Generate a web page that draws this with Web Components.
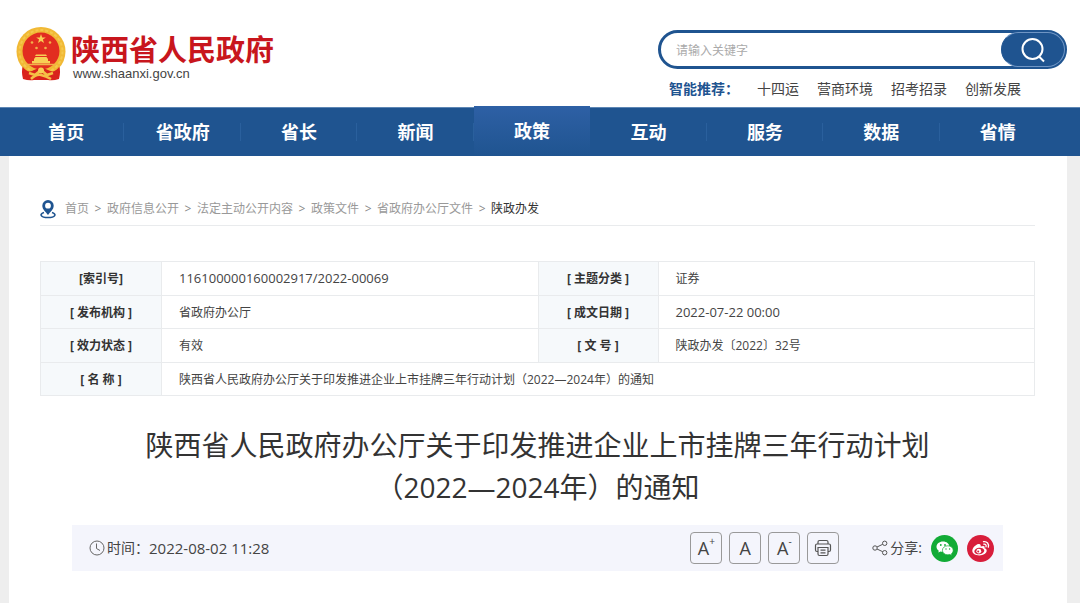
<!DOCTYPE html>
<html lang="zh-CN">
<head>
<meta charset="utf-8">
<meta name="viewport" content="width=device-width, initial-scale=1">
<title>陕西省人民政府</title>
<style>
  html, body { margin: 0; min-height: 100%; }
  html { background: #eeeeee; }
  body {
    display: flex; flex-direction: column; min-height: 100vh;
    font-family: "Open Sans", "Noto Sans CJK SC", sans-serif;
    font-size: 12px; line-height: 20px; color: #444;
    --blue: #1f5490; --line: #e9ebed;
  }
</style>
</head>
<body>
<gov-header></gov-header>
<gov-nav></gov-nav>
<gov-page>
  <crumb-trail></crumb-trail>
  <doc-info></doc-info>
  <doc-title>陕西省人民政府办公厅关于印发推进企业上市挂牌三年行动计划<br>（2022—2024年）的通知</doc-title>
  <doc-meta><time datetime="2022-08-02T11:28">2022-08-02 11:28</time></doc-meta>
</gov-page>

<script>
const define = (name, html) => {
  const t = document.createElement('template');
  t.innerHTML = html;
  customElements.define(name, class extends HTMLElement {
    constructor() {
      super();
      this.attachShadow({ mode: 'open' }).append(t.content.cloneNode(true));
    }
  });
};

define('gov-emblem', `
<style>:host{display:block;width:50px;height:54px;flex:none} svg{display:block;width:100%;height:100%}</style>
<svg viewBox="0 0 50 54" aria-hidden="true">
  <path d="M7 36Q5 45 7 52Q13 54 18 53H32Q37 54 43 52Q45 45 43 36Z" fill="#d9231c"/>
  <circle cx="25" cy="24.500" r="24.500" fill="#f1b935"/>
  <circle cx="25" cy="24.500" r="21.500" fill="none" stroke="#f5c84e" stroke-width="2" stroke-dasharray="3 2"/>
  <circle cx="25" cy="24" r="18.500" fill="#e22d20"/>
  <path d="M25 7l1.200 3.400h3.600l-2.900 2.100 1.100 3.500-3-2.100-3 2.100 1.100-3.500-2.900-2.100h3.600z" fill="#f8cf55"/>
  <g fill="#f3b04a"><circle cx="16" cy="15.500" r="1.300"/><circle cx="34" cy="15.500" r="1.300"/><circle cx="20.500" cy="21" r="1.300"/><circle cx="29.500" cy="21" r="1.300"/></g>
  <path d="M19 29l1-1.500h10l1 1.500zM18 32l1.500-2h11l1.500 2v2h2v2.500H16V34h2z" fill="#f8cf55"/>
  <path d="M10 37.500H40" stroke="#f3b04a" stroke-width="1.500"/>
  <path d="M7 40Q12 47 18 43Q25 39 32 43Q38 47 43 40L42 49Q35 51 31 48H19Q15 51 8 49Z" fill="#d9231c"/>
  <path d="M13 46L19 48 25 43 31 48 37 46M15 52Q20 47 25 48T35 52" fill="none" stroke="#f5c045" stroke-width="2.500"/>
  <circle cx="25" cy="43.500" r="3" fill="#f8cf55"/>
</svg>`);

define('gov-header', `
<style>
  :host{display:flex;justify-content:space-between;align-items:flex-start;background:#fff;padding:27px 13px 0 16px;height:80px}
  .brand{display:flex;gap:5px;text-decoration:none}
  .words{padding-top:6px;font-family:"Liberation Sans","Noto Sans CJK SC",sans-serif}
  .name{display:block;font-size:29px;line-height:36px;font-weight:700;color:#c8161d}
  .site{display:block;font-size:13px;line-height:10px;color:#444;padding-left:2px}
  .find{width:409px;padding-top:3px}
  form{display:flex;box-sizing:border-box;height:39px;border:3px solid var(--blue);border-radius:20px;background:#fff;margin:0}
  input{flex:1;min-width:0;border:0;outline:0;background:none;padding:2px 15px 0;font:inherit;color:#444}
  input::placeholder{color:#aaa;opacity:1}
  button{width:64px;margin:-1px -1px -1px 0;border:1px solid #6f95c4;border-left-color:var(--blue);border-radius:18px;background:var(--blue);padding:0;display:grid;place-items:center}
  button svg{width:26px;height:26px}
  .hot{display:flex;gap:18px;padding:10px 0 0 11px;font-size:14px;line-height:20px;white-space:nowrap}
  .hot b{color:var(--blue)} .hot a{color:#444;text-decoration:none}
</style>
<a class="brand" href="#"><gov-emblem></gov-emblem><span class="words"><strong class="name">陕西省人民政府</strong><span class="site">www.shaanxi.gov.cn</span></span></a>
<div class="find">
  <form><input type="text" aria-label="关键字" placeholder="请输入关键字"><button type="button" aria-label="搜索">
    <svg viewBox="0 0 26 26" fill="none" stroke="#fff" stroke-width="2"><circle cx="12.500" cy="12" r="10"/><path d="M19 19.500L24 24.500"/></svg></button></form>
  <div class="hot"><b>智能推荐：</b><a href="#">十四运</a><a href="#">营商环境</a><a href="#">招考招录</a><a href="#">创新发展</a></div>
</div>`);

define('gov-nav', `
<style>
  :host{display:block;background:var(--blue);box-shadow:inset 0 1px #5d86b4}
  nav{display:grid;grid-template-columns:repeat(9,1fr);padding:0 24px 0 8px}
  a{color:#fff;text-decoration:none;text-align:center;font-size:18px;font-weight:700;line-height:47px;padding-top:2px;
    background:linear-gradient(#2a609d,#2a609d) right center/1px 18px no-repeat}
  a:last-child{background:none}
  a.on{margin-top:-1px;background:linear-gradient(#2e60a5,#1f5490)}
</style>
<nav><a href="#">首页</a><a href="#">省政府</a><a href="#">省长</a><a href="#">新闻</a><a href="#" class="on" aria-current="page">政策</a><a href="#">互动</a><a href="#">服务</a><a href="#">数据</a><a href="#">省情</a></nav>`);

define('gov-page', `
<style>:host{display:block;flex:1;background:#fff;margin:0 13px 0 9px;padding:36px 32px 32px 31px}</style><slot></slot>`);

define('crumb-trail', `
<style>
  :host{display:block;border-bottom:1px solid var(--line)}
  nav{display:flex;align-items:center;padding:7px 0 6px}
  svg{width:16px;height:20px;margin-right:9px}
  a{color:#999;text-decoration:none} i{font-style:normal;color:#888;width:18px;text-align:center} b{font-weight:400;color:#333}
</style>
<nav aria-label="当前位置">
  <svg viewBox="0 0 16 20" aria-hidden="true"><path d="M4 13.500C-1 15 .5 18.500 8 18.500S17 15 12 13.500" fill="none" stroke="#1f5490" stroke-width="1.600"/><path fill-rule="evenodd" d="M8 1A5.700 5.700 0 0 0 2.300 6.700C2.300 10.500 6 13 8 16C10 13 13.700 10.500 13.700 6.700A5.700 5.700 0 0 0 8 1ZM8 3.800A2.900 2.900 0 1 1 8 9.600A2.900 2.900 0 0 1 8 3.800Z" fill="#1f5490"/></svg>
  <a href="#">首页</a><i>&gt;</i><a href="#">政府信息公开</a><i>&gt;</i><a href="#">法定主动公开内容</a><i>&gt;</i><a href="#">政策文件</a><i>&gt;</i><a href="#">省政府办公厅文件</a><i>&gt;</i><b>陕政办发</b>
</nav>`);

define('doc-info', `
<style>
  :host{display:block;padding-top:35px}
  table{width:100%;height:135px;border-collapse:collapse;table-layout:fixed}
  th,td{border:1px solid var(--line);padding:2px 0 0;font-size:12px;line-height:20px}
  th{background:#f6f9fb;color:#333;text-align:center} td{padding-left:17px;text-align:left}
  .num{font-size:13px;padding-top:0}
</style>
<table>
  <colgroup><col style="width:121px"><col><col style="width:120px"><col></colgroup>
  <tr><th scope="row">[索引号]</th><td class="num">116100000160002917/2022-00069</td><th scope="row">[ 主题分类 ]</th><td>证券</td></tr>
  <tr><th scope="row">[ 发布机构 ]</th><td>省政府办公厅</td><th scope="row">[ 成文日期 ]</th><td class="num">2022-07-22 00:00</td></tr>
  <tr><th scope="row">[ 效力状态 ]</th><td>有效</td><th scope="row">[ 文 号 ]</th><td>陕政办发〔2022〕32号</td></tr>
  <tr><th scope="row">[ 名 称 ]</th><td colspan="3">陕西省人民政府办公厅关于印发推进企业上市挂牌三年行动计划（2022—2024年）的通知</td></tr>
</table>`);

define('doc-title', `
<style>:host{display:block} h1{margin:28px 0 17px;font-size:28px;line-height:42px;font-weight:400;text-align:center;color:#333}</style>
<h1><slot></slot></h1>`);

define('doc-meta', `
<style>
  :host{display:flex;align-items:center;margin:0 32px;padding:0 9px 0 17px;height:46px;background:#f4f5fc;font-size:14px;color:#444}
  svg{display:block}
  .clock{width:16px;height:16px;margin-right:2px}
  ::slotted(time){font-size:15px}
  .tools{display:flex;gap:7px;margin-left:auto}
  button{display:flex;align-items:center;justify-content:center;box-sizing:border-box;width:32px;height:32px;padding:0;border:1px solid #999;border-radius:4px;background:none;font:inherit;font-size:18px;line-height:20px;color:#444}
  button small{font-size:10px;line-height:10px;align-self:flex-start;padding-top:3px}
  .share{display:flex;align-items:center;margin-left:33px}
  .share span{padding-left:2px}
  .share a{width:27px;height:27px;margin-left:9px} .share a svg{width:27px;height:27px}
</style>
<svg class="clock" viewBox="0 0 16 16" fill="none" stroke="#666" aria-hidden="true"><circle cx="8" cy="8" r="7"/><path d="M7.500 3.500V8.500L11 10.500"/></svg>
<span>时间：</span><slot></slot>
<div class="tools">
  <button type="button">A<small>+</small></button><button type="button">A</button><button type="button">A<small>-</small></button>
  <button type="button" aria-label="打印"><svg width="18" height="18" viewBox="0 0 18 18" fill="none" stroke="#555" stroke-width="1.200"><path d="M4 5V3Q4 1.500 5.500 1.500H12.500Q14 1.500 14 3V5M4 12.500H3Q1.500 12.500 1.500 11V6.500Q1.500 5 3 5H15Q16.500 5 16.500 6.500V11Q16.500 12.500 15 12.500H14M4 8.500H14V15Q14 16.500 12.500 16.500H5.500Q4 16.500 4 15ZM6.500 11.200H11.500M6.500 13.800H11.500"/></svg></button>
</div>
<div class="share">
  <svg width="16" height="16" viewBox="0 0 16 16" fill="none" stroke="#555" aria-hidden="true"><circle cx="3" cy="8" r="2.200"/><circle cx="12.700" cy="3.300" r="2.200"/><circle cx="12.700" cy="12.700" r="2.200"/><path d="M5 7L10.700 4.300M5 9L10.700 11.700"/></svg>
  <span>分享:</span>
  <a href="#" aria-label="微信"><svg viewBox="0 0 27 27"><circle cx="13.500" cy="13.500" r="13.500" fill="#12ab36"/><path d="M12 6.500C8.300 6.500 5.500 8.800 5.500 11.700C5.500 13.400 6.400 14.800 7.800 15.700L7.300 17.600 9.600 16.500C10.500 16.800 11.300 16.900 12.500 16.800C18 16.500 18.300 12.500 18.300 11.500C18.300 8.700 15.700 6.500 12 6.500Z" fill="#fff"/><path d="M16.800 10.800C13.700 10.800 11.400 12.800 11.400 15.300S13.700 19.800 16.800 19.800C17.600 19.800 18.300 19.700 18.900 19.500L20.900 20.500 20.400 18.800C21.500 18 22.200 16.700 22.200 15.300C22.200 12.800 19.900 10.800 16.800 10.800Z" fill="#fff" stroke="#12ab36" stroke-width=".7"/><g fill="#12ab36"><circle cx="9.800" cy="10" r=".9"/><circle cx="14" cy="10" r=".9"/><circle cx="15" cy="14" r=".7"/><circle cx="18.600" cy="14" r=".7"/></g></svg></a>
  <a href="#" aria-label="微博"><svg viewBox="0 0 27 27"><circle cx="13.500" cy="13.500" r="13.500" fill="#d81e3b"/><path d="M11.500 9C8.500 9.600 5.300 13 5.300 15.800C5.300 18.700 8.700 20.400 12.300 20.400C16.500 20.400 19.700 18 19.700 15.700C19.700 14.300 18.700 13.500 17.500 13.200C18.300 10.900 16.500 10.300 13.700 11.500C14 9.500 13.200 8.700 11.500 9Z" fill="#fff"/><ellipse cx="12.300" cy="16" rx="5" ry="3.300" fill="#d81e3b" transform="rotate(-8 12.300 16)"/><circle cx="11.800" cy="16.200" r="2.400" fill="#fff"/><circle cx="11.200" cy="16.600" r="1" fill="#d81e3b"/><path d="M16.500 6.700C20 6 22.300 9 21.300 12.200M16.800 9.200C18.700 8.900 19.600 10.200 19 11.800" fill="none" stroke="#fff" stroke-width="1.300" stroke-linecap="round"/></svg></a>
</div>`);
</script>
</body>
</html>
